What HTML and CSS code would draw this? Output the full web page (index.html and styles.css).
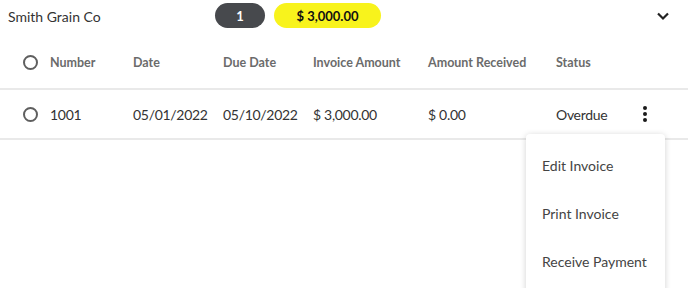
FILE: index.html
```html
<!DOCTYPE html>
<html lang="en">
<head>
    <meta charset="UTF-8">
    <meta name="viewport" content="width=device-width, initial-scale=1.0">
    <title>Invoices</title>
    <link rel="stylesheet" href="styles.css">
</head>
<body>
    <div class="customer">
        <div class="customer-header">
            <span class="customer-name">Smith Grain Co</span>
            <div class="badges">
                <span class="badge badge-count">1</span>
                <span class="badge badge-total">$ 3,000.00</span>
            </div>
            <button class="icon-button chevron">
                <svg width="14" height="10" viewBox="0 0 14 10"><path d="M2 2.5 L7 7.5 L12 2.5" fill="none" stroke="#222" stroke-width="2.2"/></svg>
            </button>
        </div>

        <div class="invoice-table">
            <div class="row head-row">
                <span class="cell"><span class="radio"></span></span>
                <span class="cell">Number</span>
                <span class="cell">Date</span>
                <span class="cell">Due Date</span>
                <span class="cell">Invoice Amount</span>
                <span class="cell">Amount Received</span>
                <span class="cell">Status</span>
                <span class="cell"></span>
            </div>
            <div class="row data-row">
                <span class="cell"><span class="radio"></span></span>
                <span class="cell">1001</span>
                <span class="cell">05/01/2022</span>
                <span class="cell">05/10/2022</span>
                <span class="cell">$ 3,000.00</span>
                <span class="cell">$ 0.00</span>
                <span class="cell">Overdue</span>
                <span class="cell">
                    <button class="icon-button kebab">
                        <svg width="6" height="18" viewBox="0 0 6 18"><circle cx="3" cy="3" r="2"/><circle cx="3" cy="9" r="2"/><circle cx="3" cy="15" r="2"/></svg>
                    </button>
                </span>
            </div>
        </div>

        <!-- Row actions menu -->
        <div class="menu">
            <div class="menu-item">Edit Invoice</div>
            <div class="menu-item">Print Invoice</div>
            <div class="menu-item">Receive Payment</div>
        </div>
    </div>
</body>
</html>
```

FILE: styles.css
```css
* {
    margin: 0;
    padding: 0;
    box-sizing: border-box;
    font-family: 'Lato', 'Noto Sans', sans-serif;
}

body {
    background: #ffffff;
    color: #333333;
    overflow: hidden;
}

.customer {
    position: relative;
    height: 288px;
    overflow: hidden;
}

/* Customer header */
.customer-header {
    display: flex;
    align-items: center;
    height: 30px;
    padding: 0 8px;
}

.customer-name {
    width: 207px;
    font-size: 14px;
    color: #333333;
    padding-top: 3px;
}

.badges {
    display: flex;
    gap: 9px;
    flex: 1;
    margin-top: 1px;
}

.badge {
    display: flex;
    align-items: center;
    justify-content: center;
    height: 25px;
    border-radius: 13px;
    font-size: 13px;
    font-weight: bold;
}

.badge-count {
    width: 50px;
    background: #47494d;
    color: #ffffff;
}

.badge-total {
    width: 107px;
    background: #f8f31c;
    color: #111111;
}

.icon-button {
    background: none;
    border: none;
    display: flex;
    align-items: center;
    justify-content: center;
    cursor: pointer;
}

.chevron {
    margin-right: 10px;
    margin-top: 2px;
}

/* Table */
.row {
    display: grid;
    grid-template-columns: 50px 83px 90px 90px 115px 128px 74px 1fr;
    align-items: center;
    height: 50px;
    border-bottom: 2px solid #e9e9e9;
}

.head-row {
    margin-top: 10px;
    padding-bottom: 4px;
    font-size: 12.5px;
    font-weight: bold;
    color: #6b6b6b;
}

.data-row {
    font-size: 14px;
    color: #333333;
    letter-spacing: -0.3px;
}

.cell {
    white-space: nowrap;
}

.cell:first-child {
    display: flex;
    justify-content: center;
    padding-left: 10px;
}

.radio {
    width: 15px;
    height: 15px;
    border: 2px solid #5f5f5f;
    border-radius: 50%;
}

.kebab {
    margin-left: 12px;
    fill: #1a1a1a;
}

/* Actions menu */
.menu {
    position: absolute;
    top: 134px;
    left: 526px;
    width: 139px;
    height: 170px;
    background: #ffffff;
    border-radius: 4px;
    box-shadow: 0 1px 6px rgba(0,0,0,0.18);
    padding-top: 7px;
}

.menu-item {
    height: 48px;
    display: flex;
    align-items: center;
    padding-left: 16px;
    font-size: 14px;
    color: #444444;
}
```
